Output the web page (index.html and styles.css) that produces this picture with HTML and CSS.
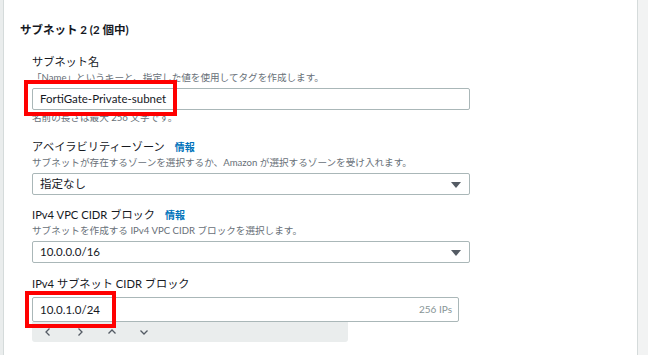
FILE: index.html
```html
<!DOCTYPE html>
<html lang="ja">
<head>
<meta charset="utf-8">
<link rel="stylesheet" href="styles.css">
</head>
<body>
<div class="page">
  <div class="side-left"></div>
  <main class="main">
    <h2 class="heading">サブネット 2 (2 個中)</h2>

    <div class="field f1">
      <div class="label">サブネット名</div>
      <div class="desc">「Name」というキーと、指定した値を使用してタグを作成します。</div>
      <div class="control-wrap">
        <div class="input">FortiGate-Private-subnet</div>
        <div class="mark mark1"></div>
      </div>
      <div class="desc constraint">名前の長さは最大 256 文字です。</div>
    </div>

    <div class="field f2">
      <div class="label">アベイラビリティーゾーン<span class="info">情報</span></div>
      <div class="desc">サブネットが存在するゾーンを選択するか、Amazon が選択するゾーンを受け入れます。</div>
      <div class="select">指定なし<span class="caret"></span></div>
    </div>

    <div class="field f3">
      <div class="label">IPv4 VPC CIDR ブロック<span class="info">情報</span></div>
      <div class="desc">サブネットを作成する IPv4 VPC CIDR ブロックを選択します。</div>
      <div class="select">10.0.0.0/16<span class="caret"></span></div>
    </div>

    <div class="field f4">
      <div class="label">IPv4 サブネット CIDR ブロック</div>
      <div class="control-wrap">
        <div class="input input-cidr">10.0.1.0/24<span class="ips">256 IPs</span></div>
        <div class="mark mark2"></div>
      </div>
      <div class="stepper">
        <span class="step">
          <svg width="10" height="10" viewBox="0 0 10 10"><path d="M6.5 1.5 L3 5 L6.5 8.5" fill="none" stroke="#545b64" stroke-width="1.3"/></svg>
        </span>
        <span class="step">
          <svg width="10" height="10" viewBox="0 0 10 10"><path d="M3.5 1.5 L7 5 L3.5 8.5" fill="none" stroke="#545b64" stroke-width="1.3"/></svg>
        </span>
        <span class="step">
          <svg width="10" height="10" viewBox="0 0 10 10"><path d="M1.5 6.5 L5 3 L8.5 6.5" fill="none" stroke="#545b64" stroke-width="1.3"/></svg>
        </span>
        <span class="step">
          <svg width="10" height="10" viewBox="0 0 10 10"><path d="M1.5 3.5 L5 7 L8.5 3.5" fill="none" stroke="#545b64" stroke-width="1.3"/></svg>
        </span>
      </div>
    </div>
  </main>
  <div class="side-right"></div>
</div>
</body>
</html>
```

FILE: styles.css
```css
* { box-sizing: border-box; }
html, body {
  margin: 0;
  padding: 0;
  background: #ffffff;
}
body {
  font-family: Lato, "Noto Sans CJK JP", sans-serif;
  color: #16191f;
  width: 648px;
  height: 355px;
  overflow: hidden;
}
.page {
  display: flex;
  height: 355px;
}
.side-left {
  width: 4px;
  background: #eaeded;
  border-right: 1px solid #d5dbdb;
  flex: none;
}
.main {
  flex: 1;
  padding: 22px 0 0 16px;
}
.side-right {
  width: 11px;
  flex: none;
  background: #f2f3f3;
  border-left: 1px solid #d5dbdb;
}
.heading {
  margin: 0;
  font-size: 11.5px;
  line-height: 16px;
  font-weight: 700;
  color: #16191f;
}
.field {
  margin-left: 12px;
  width: 438px;
}
.f1 { margin-top: 16px; }
.f2 { margin-top: 14px; }
.f3 { margin-top: 12px; }
.f4 { margin-top: 13px; }
.label {
  font-size: 11.2px;
  line-height: 16px;
  color: #16191f;
}
.info {
  margin-left: 10px;
  font-size: 10px;
  font-weight: 700;
  color: #0073bb;
}
.desc {
  font-size: 9.6px;
  line-height: 15px;
  color: #687078;
}
.control-wrap {
  position: relative;
  margin-top: 3px;
}
.input, .select {
  height: 22px;
  border: 1px solid #aab7b8;
  border-radius: 2px;
  font-size: 11.5px;
  line-height: 20px;
  padding-left: 7px;
  background: #fff;
  color: #16191f;
  position: relative;
}
.select { margin-top: 3px; }
.constraint { margin-top: 0; }
.caret {
  position: absolute;
  right: 8px;
  top: 8px;
  width: 0;
  height: 0;
  border-left: 5px solid transparent;
  border-right: 5px solid transparent;
  border-top: 6px solid #545b64;
}
.f4 .control-wrap { margin-top: 5px; }
.input-cidr {
  width: 427px;
  height: 25px;
  line-height: 23px;
  display: flex;
  justify-content: space-between;
  padding-right: 6px;
}
.ips {
  font-size: 10px;
  color: #879596;
}
.mark {
  position: absolute;
  border: 4px solid #ff0000;
}
.mark1 {
  left: -8px;
  top: -8px;
  width: 153px;
  height: 36px;
}
.mark2 {
  left: -7px;
  top: -6px;
  width: 91px;
  height: 37px;
}
.stepper {
  width: 316px;
  height: 20px;
  background: #eaeded;
  border-radius: 0 0 3px 3px;
  display: flex;
  align-items: center;
  padding-left: 0;
}
.step {
  width: 32px;
  display: flex;
  justify-content: center;
}
.step svg { display: block; }
```
